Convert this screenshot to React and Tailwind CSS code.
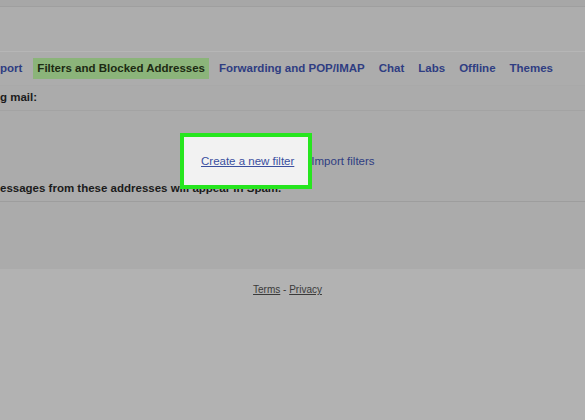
import React from "react";

const tabs = ["Forwarding and POP/IMAP", "Chat", "Labs", "Offline", "Themes"];

const App = () => {
  return (
    <div className="w-[585px] h-[420px] overflow-hidden bg-[#b2b2b2] font-['Liberation_Sans',Arial,sans-serif] text-[11.5px]">
      {/* top strip */}
      <div className="h-[7px] bg-[#a7a7a7] border-b border-[#9f9f9f]" />
      <div className="h-[45px] bg-[#adadad] border-b border-[#b6b6b6]" />

      {/* settings tabs */}
      <div className="h-[34px] bg-[#acacac] border-b border-[#a9a9a9] flex items-center font-bold text-[#2f3d82]">
        <span className="mr-[11px]">port</span>
        <span className="px-[4px] py-[2px] bg-[#8bb47a] text-[#1c2a12] mr-[10px]">Filters and Blocked Addresses</span>
        <div className="flex gap-[14px]">
          {tabs.map((t) => (
            <span key={t}>{t}</span>
          ))}
        </div>
      </div>

      {/* filters */}
      <div className="bg-[#ababab]">
        <div className="h-[25px] flex items-center font-bold text-[#1b1b1b] border-b border-[#a3a3a3]">g mail:</div>
        <div className="relative h-[91px] border-b border-[#9d9d9d]">
          <div className="absolute left-[180px] top-[22px] w-[132px] h-[56px] border-[4px] border-[#27e61f] bg-[#f2f2f2]" />
          <div className="relative z-10 pt-[42px] pl-[201px] flex gap-[17px]">
            <span className="text-[#3a4f9f] underline">Create a new filter</span>
            <span className="text-[#2f3d82]">Import filters</span>
          </div>
          <div className="pt-[10px] font-bold text-[#1b1b1b]">essages from these addresses will appear in Spam.</div>
        </div>
        <div className="h-[67px]" />
      </div>

      {/* footer */}
      <div className="pt-[13px] pr-[10px] text-center text-[10px] text-[#3a3a3a]">
        <span className="underline">Terms</span> - <span className="underline">Privacy</span>
      </div>
    </div>
  );
};

export default App;
